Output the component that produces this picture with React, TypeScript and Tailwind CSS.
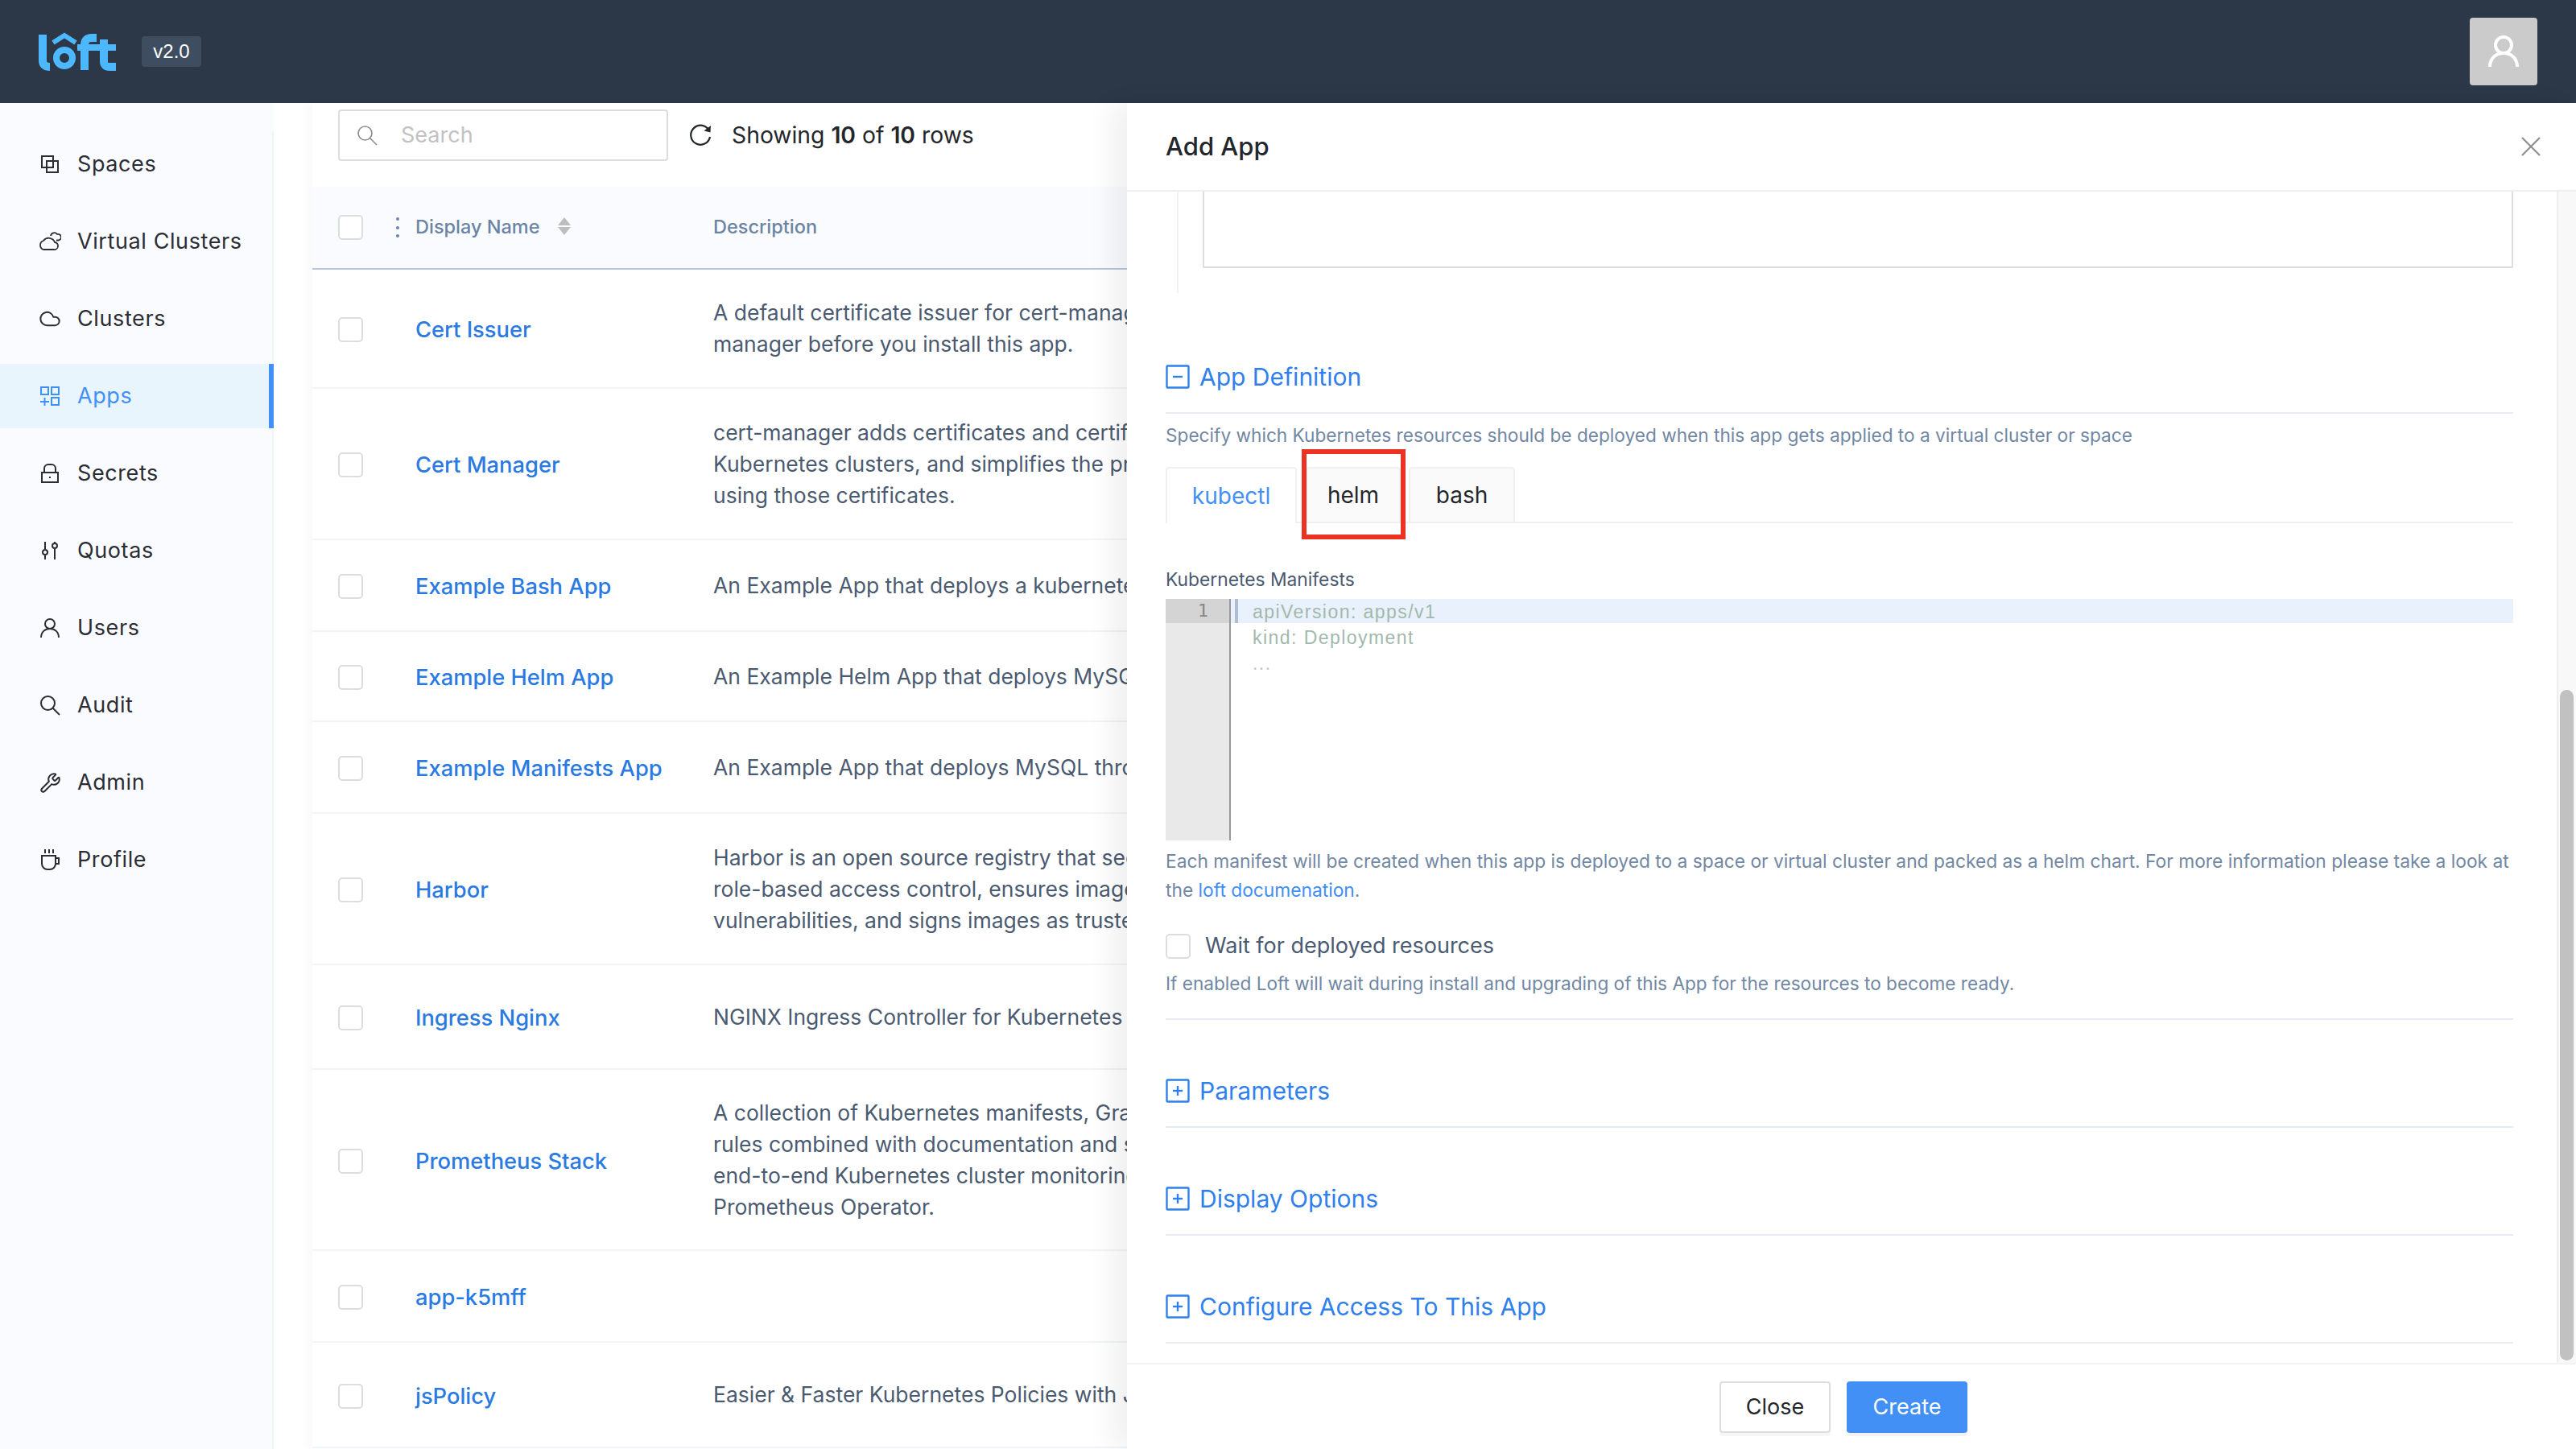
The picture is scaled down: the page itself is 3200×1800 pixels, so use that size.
import { Wrench, Cloud } from "lucide-react";

const navItems = [
  { label: "Spaces", icon: <SpacesIcon /> },
  { label: "Virtual Clusters", icon: <VClusterIcon /> },
  { label: "Clusters", icon: <Cloud size={32} strokeWidth={1.7} /> },
  { label: "Apps", icon: <AppsIcon />, active: true },
  { label: "Secrets", icon: <LockIcon /> },
  { label: "Quotas", icon: <QuotasIcon /> },
  { label: "Users", icon: <UserIcon /> },
  { label: "Audit", icon: <SearchIcon /> },
  { label: "Admin", icon: <Wrench size={27} strokeWidth={1.8} /> },
  { label: "Profile", icon: <CupIcon /> },
];

const rows = [
  { name: "Cert Issuer", h: "h-[148px]", lines: ["A default certificate issuer for cert-manager. Make sure to install cert-", "manager before you install this app."] },
  { name: "Cert Manager", h: "h-[188px]", lines: ["cert-manager adds certificates and certificate issuers as resource types in", "Kubernetes clusters, and simplifies the process of obtaining, renewing and", "using those certificates."] },
  { name: "Example Bash App", h: "h-[114px]", lines: ["An Example App that deploys a kubernetes deployment"] },
  { name: "Example Helm App", h: "h-[112px]", lines: ["An Example Helm App that deploys MySQL"] },
  { name: "Example Manifests App", h: "h-[114px]", lines: ["An Example App that deploys MySQL through manifests"] },
  { name: "Harbor", h: "h-[188px]", lines: ["Harbor is an open source registry that secures artifacts with policies and", "role-based access control, ensures images are scanned and free from", "vulnerabilities, and signs images as trusted."] },
  { name: "Ingress Nginx", h: "h-[130px]", lines: ["NGINX Ingress Controller for Kubernetes"] },
  { name: "Prometheus Stack", h: "h-[225px]", lines: ["A collection of Kubernetes manifests, Grafana dashboards, and Prometheus", "rules combined with documentation and scripts to provide easy to operate", "end-to-end Kubernetes cluster monitoring with Prometheus using the", "Prometheus Operator."] },
  { name: "app-k5mff", h: "h-[114px]", lines: [] },
  { name: "jsPolicy", h: "h-[131px]", lines: ["Easier & Faster Kubernetes Policies with JavaScript"] },
];

export default function App() {
  return (
    <div className="flex flex-col h-[1800px] w-[3200px] overflow-hidden bg-white font-['Inter',sans-serif]">
      <header className="h-[128px] shrink-0 bg-[#2c3747] flex items-center justify-between pl-[46px] pr-[48px]">
        <div className="flex items-center gap-[32px]">
          <Logo />
          <span className="w-[74px] h-[38px] rounded-[4px] bg-[#3f4d60] text-white text-[24px] font-['Liberation_Sans',sans-serif] flex items-center justify-center">v2.0</span>
        </div>
        <div className="w-[84px] h-[84px] rounded-[4px] bg-[#cbcbcb] flex items-center justify-center">
          <svg width="40" height="42" viewBox="0 0 40 42" fill="none" stroke="#fff" strokeWidth="4">
            <circle cx="20" cy="13" r="10" />
            <path d="M3 40c0-10 7-17 17-17s17 7 17 17" />
          </svg>
        </div>
      </header>

      <div className="relative flex flex-1 min-h-0">
        {/* Sidebar */}
        <nav className="w-[340px] shrink-0 bg-[#fafbff] pt-[36px]">
          <div className="border-r-[2px] border-[#f1f2f5] h-full">
            <ul className="flex flex-col">
              {navItems.map((item) => (
                <li
                  key={item.label}
                  className={`h-[80px] mb-[16px] flex items-center pl-[48px] text-[27px] tracking-[0.6px] ${
                    item.active ? "bg-[#e8f5fd] text-[#4290f5] border-r-[6px] border-[#4290f5] -mr-[2px]" : "text-[#2a2d33]"
                  }`}
                >
                  <span className="w-[28px] h-[28px] flex items-center justify-center mr-[20px]">{item.icon}</span>
                  <span className="mt-[1px]">{item.label}</span>
                </li>
              ))}
            </ul>
          </div>
        </nav>

        {/* Table */}
        <main className="ml-[48px] flex-1 min-w-0 shadow-[-8px_0_10px_rgba(0,0,0,0.025)]">
          <div className="h-[104px] flex items-start pl-[32px] pt-[8px]">
            <div className="w-[410px] h-[64px] border-[2px] border-[#dddddd] rounded-[4px] flex items-center pl-[21px]">
              <svg width="26" height="26" viewBox="0 0 26 26" fill="none" stroke="#8c8c8c" strokeWidth="1.6">
                <circle cx="10.5" cy="10.5" r="8.5" />
                <path d="M16.5 16.5l8.5 8.5" />
              </svg>
              <span className="ml-[29px] text-[27px] text-[#c2c2c2]">Search</span>
            </div>
            <div className="h-[64px] flex items-center ml-[26px] text-[28.3px] text-[#23262b]">
              <svg width="28" height="28" viewBox="0 0 28 28" fill="none" stroke="#23262b" strokeWidth="2.2">
                <path d="M25 8.5A12 12 0 1 0 26 16" />
                <path d="M27 2l-.5 8.5-8-2z" fill="#23262b" strokeWidth="0" />
              </svg>
              <span className="ml-[25px]">Showing <span className="font-semibold">10</span> of <span className="font-semibold">10</span> rows</span>
            </div>
          </div>
          <div className="h-[103px] bg-[#f9fbfe] border-b-[2px] border-[#b9c6da] flex items-center pl-[32px] text-[23.5px] font-medium text-[#6b84a3]">
            <Checkbox />
            <span className="w-[4px] h-[25px] ml-[41px] mr-[20px] flex flex-col justify-between">
              <span className="w-[4px] h-[4px] rounded-full bg-[#6b84a3]" />
              <span className="w-[4px] h-[4px] rounded-full bg-[#6b84a3]" />
              <span className="w-[4px] h-[4px] rounded-full bg-[#6b84a3]" />
            </span>
            <span className="w-[370px] shrink-0 flex items-center -mt-[2px]">
              Display Name
              <svg width="16" height="24" viewBox="0 0 16 24" className="ml-[22px] -mt-[1px]">
                <path d="M8 1l8 10H0z" fill="#bdbdbd" />
                <path d="M8 23l8-10H0z" fill="#bdbdbd" />
              </svg>
            </span>
            <span className="-mt-[2px]">Description</span>
          </div>
          {rows.map((row) => (
            <div key={row.name} className={`${row.h} border-b-[2px] border-[#f1f5f9] flex items-center pl-[32px]`}>
              <span className="mt-[3px]"><Checkbox /></span>
              <span className="w-[370px] ml-[65px] mt-[5px] shrink-0 text-[27.3px] font-medium text-[#2a7ae2]">{row.name}</span>
              <div className="text-[26.5px] leading-[39px] text-[#4a5a70] whitespace-nowrap">
                {row.lines.map((line) => (
                  <div key={line}>{line}</div>
                ))}
              </div>
            </div>
          ))}
        </main>

        {/* Drawer */}
        <aside className="absolute top-0 bottom-0 right-0 w-[1800px] bg-white flex flex-col shadow-[-20px_0_30px_rgba(0,0,0,0.06)]">
          <div className="h-[110px] shrink-0 border-b-[2px] border-[#eeeeee] flex items-center justify-between pl-[48px] pr-[44px]">
            <span className="text-[31px] font-medium text-[#23262b]">Add App</span>
            <svg width="24" height="24" viewBox="0 0 24 24" fill="none" stroke="#8f8f8f" strokeWidth="2.2">
              <path d="M1 1l22 22M23 1L1 23" />
            </svg>
          </div>

          <div className="flex flex-1 min-h-0">
            <div className="flex-1 min-w-0 pl-[48px] pr-[54px]">
              <div className="h-[126px] ml-[14px] border-l-[2px] border-[#eef1f6] pl-[30px]">
                <div className="h-[95px] border-[2px] border-t-0 border-[#dddddd] rounded-b-[2px]" />
              </div>

              <SectionHead title="App Definition" open className="mt-[88px]" />
              <p className="mt-[12px] text-[22.65px] leading-[30px] text-[#7187a3]">
                Specify which Kubernetes resources should be deployed when this app gets applied to a virtual cluster or space
              </p>

              <div className="relative mt-[24px] h-[70px] flex items-end border-b-[2px] border-[#f0f0f0] text-[28px]">
                <span className="w-[163px] h-[70px] -mb-[2px] bg-white border-[2px] border-b-0 border-[#f0f0f0] rounded-t-[4px] text-[#4290f5] flex items-center justify-center">kubectl</span>
                <span className="ml-[11px] w-[118px] h-[68px] bg-[#fafafa] border-[2px] border-b-0 border-[#f0f0f0] rounded-t-[4px] text-[#23262b] flex items-center justify-center">helm</span>
                <span className="ml-[10px] w-[132px] h-[68px] bg-[#fafafa] border-[2px] border-b-0 border-[#f0f0f0] rounded-t-[4px] text-[#23262b] flex items-center justify-center">bash</span>
                <span className="absolute left-[169px] top-[-22px] w-[129px] h-[112px] border-[6px] border-[#ec3323]" />
              </div>

              <div className="mt-[55px] text-[22.8px] leading-[30px] text-[#4a5a70]">Kubernetes Manifests</div>
              <div className="mt-[9px] h-[300px] flex font-['Liberation_Sans',sans-serif] text-[23px] tracking-[1.45px] leading-[32px]">
                <div className="w-[81px] shrink-0 bg-[#e9e9e9] border-r-[2px] border-[#999999]">
                  <div className="h-[30px] bg-[#d4d4d4] text-right pr-[26px] leading-[30px] text-[#888888] text-[22px] font-['DejaVu_Sans_Mono',monospace] tracking-normal">1</div>
                </div>
                <div className="flex-1 min-w-0 text-[#a3b8ac]">
                  <div className="h-[30px] bg-[#e8f1fc] flex leading-[32px]">
                    <span className="ml-[5px] w-[4px] h-full bg-[#b0bccf]" />
                    <span className="ml-[18px]">apiVersion: apps/v1</span>
                  </div>
                  <div className="pl-[27px] pt-[2px]">kind: Deployment</div>
                  <div className="pl-[27px] text-[#c4c4c4]">...</div>
                </div>
              </div>

              <p className="mt-[8px] text-[22.77px] leading-[36px] text-[#7187a3]">
                Each manifest will be created when this app is deployed to a space or virtual cluster and packed as a helm chart. For more information please take a look at the <span className="text-[#3f8ef5]">loft documenation</span>.
              </p>

              <div className="mt-[35px] flex items-center h-[32px]">
                <Checkbox />
                <span className="ml-[18px] text-[27px] text-[#4a5a70]">Wait for deployed resources</span>
              </div>
              <p className="mt-[16px] text-[22.6px] leading-[30px] text-[#7187a3]">
                If enabled Loft will wait during install and upgrading of this App for the resources to become ready.
              </p>
              <div className="mt-[28px] border-b-[2px] border-[#e6ebf5]" />

              <SectionHead title="Parameters" className="mt-[72px]" />
              <SectionHead title="Display Options" className="mt-[72px]" />
              <SectionHead title="Configure Access To This App" className="mt-[72px]" />
            </div>

            <div className="w-[24px] shrink-0 bg-[#f8f8f8] border-l-[2px] border-[#eeeeee] pt-[619px] pb-[3px] pl-[2px]">
              <div className="w-[17px] h-full rounded-full bg-[#c1c1c1]" />
            </div>
          </div>

          <div className="h-[107px] shrink-0 border-t-[2px] border-[#eff3f8] pt-[21px] pr-[20px] flex justify-center items-start gap-[20px] text-[27px]">
            <button className="w-[138px] h-[64px] bg-white border-[2px] border-[#dddddd] rounded-[4px] text-[#23262b] shadow-[0_4px_0_#f6f6f6]">Close</button>
            <button className="w-[150px] h-[64px] bg-[#4290f5] rounded-[4px] text-white shadow-[0_4px_0_#f3f3f3]">Create</button>
          </div>
        </aside>
      </div>
    </div>
  );
}

function Checkbox() {
  return <span className="block shrink-0 w-[31px] h-[31px] bg-white border-[2px] border-[#dddddd] rounded-[5px]" />;
}

function SectionHead({ title, open, className }: { title: string; open?: boolean; className?: string }) {
  return (
    <div className={`${className} h-[62px] pb-[28px] box-border border-b-[2px] border-[#e6ebf5] flex items-center text-[#2f80ed] text-[30px]`}>
      <svg width="30" height="30" viewBox="0 0 30 30" fill="none" stroke="#2f80ed" strokeWidth="2.4" className="mr-[12px] shrink-0">
        <rect x="1.5" y="1.5" width="27" height="27" rx="1" />
        <path d="M9 15h12" />
        {!open && <path d="M15 9v12" />}
      </svg>
      {title}
    </div>
  );
}

function Logo() {
  return (
    <svg width="98" height="50" viewBox="46 39 98 50" fill="none" stroke="#4db8ff">
      <path d="M53 43v32q0 8 9 8" strokeWidth="10" />
      <circle cx="80" cy="72" r="10" strokeWidth="8" />
      <path d="M66 53l14-9 14 9" strokeWidth="6" />
      <path d="M105 87V56q0-9 9-9h6" strokeWidth="10" />
      <path d="M96 59h24" strokeWidth="8" />
      <path d="M129 49v27q0 7 7 7h8" strokeWidth="10" />
      <path d="M120 59h24" strokeWidth="8" />
    </svg>
  );
}

function SpacesIcon() {
  return (
    <svg width="24" height="24" viewBox="0 0 24 24" fill="none" stroke="currentColor" strokeWidth="2">
      <rect x="2" y="2" width="14" height="14" />
      <rect x="8" y="8" width="14" height="14" />
    </svg>
  );
}

function VClusterIcon() {
  return (
    <svg width="28" height="24" viewBox="0 0 28 24" fill="none" stroke="currentColor" strokeWidth="1.8" strokeLinejoin="round">
      <path d="M6 22h13a4.5 4.5 0 0 0 1-9 8 8 0 0 0-14-2A5.8 5.8 0 0 0 6 22z" />
      <path d="M15 5a4.5 4.5 0 0 1 8-2 3.8 3.8 0 0 1 2 7.5h-3" />
    </svg>
  );
}

function AppsIcon() {
  return (
    <svg width="26" height="26" viewBox="0 0 26 26" fill="none" stroke="currentColor" strokeWidth="2">
      <rect x="2" y="2" width="9" height="9" />
      <rect x="15" y="2" width="9" height="9" />
      <rect x="15" y="15" width="9" height="9" />
      <path d="M1 20h11M6.5 15v10" />
    </svg>
  );
}

function LockIcon() {
  return (
    <svg width="24" height="26" viewBox="0 0 24 26" fill="none" stroke="currentColor" strokeWidth="2">
      <rect x="2" y="12" width="20" height="12" />
      <path d="M5 12V7a5 5 0 0 1 5-5h4a5 5 0 0 1 5 5v5" />
      <path d="M12 17v2" />
    </svg>
  );
}

function QuotasIcon() {
  return (
    <svg width="22" height="24" viewBox="0 0 22 24" fill="none" stroke="currentColor" strokeWidth="2">
      <path d="M5 1v9M5 18v5M17 1v1M17 10v13" />
      <circle cx="5" cy="14" r="3" />
      <circle cx="17" cy="6" r="3" />
    </svg>
  );
}

function UserIcon() {
  return (
    <svg width="26" height="26" viewBox="0 0 26 26" fill="none" stroke="currentColor" strokeWidth="2">
      <circle cx="13" cy="8" r="6" />
      <path d="M2 25c0-7 5-11 11-11s11 4 11 11" />
    </svg>
  );
}

function SearchIcon() {
  return (
    <svg width="26" height="26" viewBox="0 0 26 26" fill="none" stroke="currentColor" strokeWidth="2">
      <circle cx="10.5" cy="10.5" r="8.5" />
      <path d="M16.5 16.5l8.5 8.5" />
    </svg>
  );
}

function CupIcon() {
  return (
    <svg width="26" height="28" viewBox="0 0 26 28" fill="none" stroke="currentColor" strokeWidth="2">
      <path d="M7 1v5M12 1v5M17 1v5" />
      <path d="M3 9h17v10a7 7 0 0 1-7 7h-3a7 7 0 0 1-7-7z" />
      <path d="M20 12h4v7h-4" />
    </svg>
  );
}
